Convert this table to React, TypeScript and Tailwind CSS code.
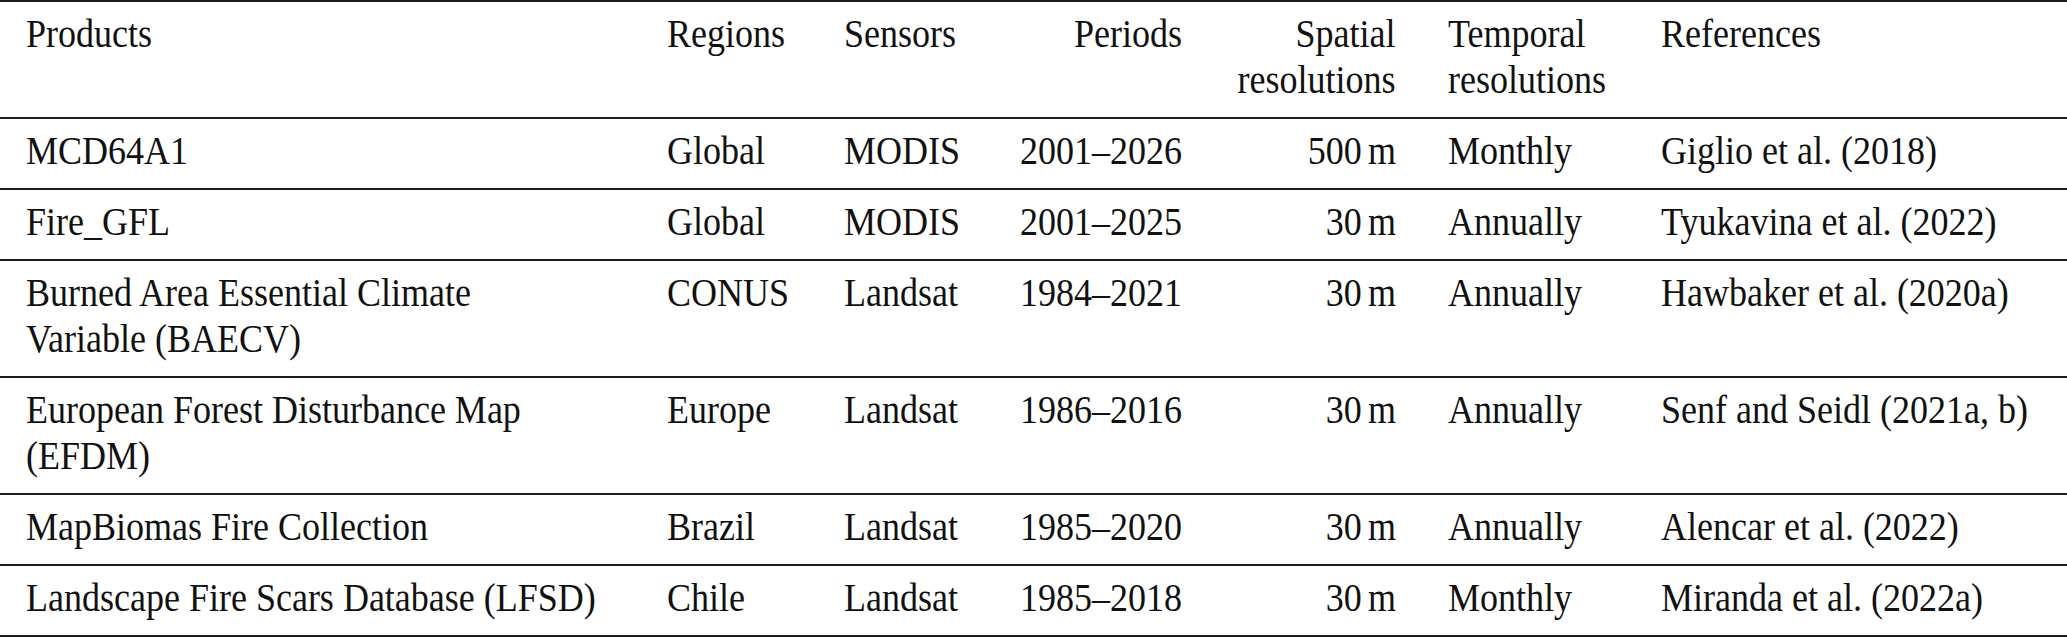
type Row = {
  product: React.ReactNode;
  region: string;
  sensor: string;
  period: string;
  spatial: string;
  temporal: string;
  reference: string;
};

const rows: Row[] = [
  { product: 'MCD64A1', region: 'Global', sensor: 'MODIS', period: '2001–2026', spatial: '500 m', temporal: 'Monthly', reference: 'Giglio et al. (2018)' },
  { product: 'Fire_GFL', region: 'Global', sensor: 'MODIS', period: '2001–2025', spatial: '30 m', temporal: 'Annually', reference: 'Tyukavina et al. (2022)' },
  {
    product: (
      <>
        Burned Area Essential Climate
        <br />
        Variable (BAECV)
      </>
    ),
    region: 'CONUS',
    sensor: 'Landsat',
    period: '1984–2021',
    spatial: '30 m',
    temporal: 'Annually',
    reference: 'Hawbaker et al. (2020a)',
  },
  {
    product: (
      <>
        European Forest Disturbance Map
        <br />
        (EFDM)
      </>
    ),
    region: 'Europe',
    sensor: 'Landsat',
    period: '1986–2016',
    spatial: '30 m',
    temporal: 'Annually',
    reference: 'Senf and Seidl (2021a, b)',
  },
  { product: 'MapBiomas Fire Collection', region: 'Brazil', sensor: 'Landsat', period: '1985–2020', spatial: '30 m', temporal: 'Annually', reference: 'Alencar et al. (2022)' },
  { product: 'Landscape Fire Scars Database (LFSD)', region: 'Chile', sensor: 'Landsat', period: '1985–2018', spatial: '30 m', temporal: 'Monthly', reference: 'Miranda et al. (2022a)' },
];

// column edges taken from the table rules: text sits 26px inside each cell
const gridCols = 'grid grid-cols-[641px_177px_172px_218px_214px_213px_1fr]';
const cell = 'px-[26px] pt-[9px] pb-[14px] whitespace-nowrap';
// right-aligned numeric columns: flex end so wide text spills leftwards, not into the next column
const cellRight = `${cell} flex justify-end items-start text-right`;

// the typeset table uses a slightly condensed Times, so squeeze glyphs horizontally
function Txt({ children, right }: { children: React.ReactNode; right?: boolean }) {
  return (
    <span className={`inline-block scale-x-90 ${right ? 'origin-right' : 'origin-left'}`}>{children}</span>
  );
}

// "500 m" style values use a thin space between number and unit
function Unit({ value }: { value: string }) {
  const [num, unit] = value.split(' ');
  return (
    <>
      {num}
      <span className="inline-block w-[7px]" />
      {unit}
    </>
  );
}

export default function App() {
  return (
    <div className="w-[2067px] bg-white text-[40px] leading-[46px] text-[#111] font-['Liberation_Serif',serif]">
      <div className="border-t-2 border-[#1c1c1c]">
        {/* header */}
        <div className={`${gridCols} border-b-2 border-[#1c1c1c]`}>
          <div className={cell}>
            <Txt>Products</Txt>
          </div>
          <div className={cell}>
            <Txt>Regions</Txt>
          </div>
          <div className={cell}>
            <Txt>Sensors</Txt>
          </div>
          <div className={cellRight}>
            <Txt right>Periods</Txt>
          </div>
          <div className={cellRight}>
            <Txt right>
              Spatial
              <br />
              resolutions
            </Txt>
          </div>
          <div className={cell}>
            <Txt>
              Temporal
              <br />
              resolutions
            </Txt>
          </div>
          <div className={cell}>
            <Txt>References</Txt>
          </div>
        </div>

        {rows.map((r) => (
          <div key={r.reference} className={`${gridCols} border-b-2 border-[#1c1c1c]`}>
            <div className={cell}>
              <Txt>{r.product}</Txt>
            </div>
            <div className={cell}>
              <Txt>{r.region}</Txt>
            </div>
            <div className={cell}>
              <Txt>{r.sensor}</Txt>
            </div>
            <div className={cellRight}>
              <Txt right>{r.period}</Txt>
            </div>
            <div className={cellRight}>
              <Txt right>
                <Unit value={r.spatial} />
              </Txt>
            </div>
            <div className={cell}>
              <Txt>{r.temporal}</Txt>
            </div>
            <div className={cell}>
              <Txt>{r.reference}</Txt>
            </div>
          </div>
        ))}
      </div>
    </div>
  );
}
